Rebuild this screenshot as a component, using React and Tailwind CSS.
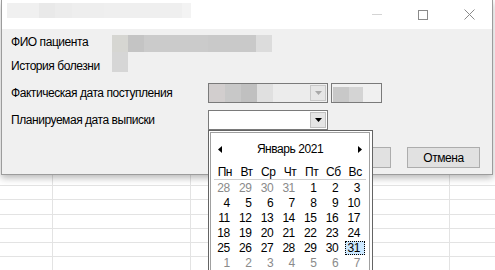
import React from 'react'

const cur = (a, b) => Array.from({ length: b - a + 1 }, (_, i) => ({ d: a + i, muted: false }))
const weeks = [
  [28, 29, 30, 31].map((d) => ({ d, muted: true })).concat(cur(1, 3)),
  cur(4, 10),
  cur(11, 17),
  cur(18, 24),
  cur(25, 31),
  [1, 2, 3, 4, 5, 6, 7].map((d) => ({ d, muted: true })),
]
const dayNames = ['Пн', 'Вт', 'Ср', 'Чт', 'Пт', 'Сб', 'Вс']

function Sheet() {
  const rows = [186, 14, 15, 14, 14, 14, 14]
  return (
    <div className="flex flex-col">
      {rows.map((h, i) => (
        <div key={i} className="flex border-b border-[#e3e3e3]" style={{ height: h }}>
          <div className="w-[53px] border-r border-[#e3e3e3]" />
          <div className="w-[138px] border-r border-[#e3e3e3]" />
          <div className="w-[259px] border-r border-[#e3e3e3]" />
          <div className="flex-1" />
        </div>
      ))}
    </div>
  )
}

function Calendar() {
  return (
    <div className="absolute left-0 top-[20px] w-[165px] h-[145px] border border-[#646464] bg-white pl-[1px] pr-[2px] pt-[1px] z-10">
      <div className="h-full border border-[#a0a0a0] bg-white">
        {/* month header */}
        <div className="h-[32px] flex items-center justify-between px-[7px]">
          <svg width="4" height="7" viewBox="0 0 4 7"><path d="M4 0 L0 3.5 L4 7 Z" fill="#000" /></svg>
          <span className="text-black">Январь 2021</span>
          <svg width="4" height="7" viewBox="0 0 4 7"><path d="M0 0 L4 3.5 L0 7 Z" fill="#000" /></svg>
        </div>
        <div className="px-[3px]">
          <div className="grid grid-cols-7 h-[15px] items-center border-b border-[#d0d0d0]">
            {dayNames.map((n) => (
              <div key={n} className="text-center text-black">{n}</div>
            ))}
          </div>
          {weeks.map((w, i) => (
            <div key={i} className="grid grid-cols-7 h-[15px]">
              {w.map((c, j) => {
                const sel = i === 4 && j === 6
                return (
                  <div key={j} className="relative h-[15px]">
                    {sel && <div className="absolute left-[1px] right-[1px] top-[1px] bottom-0 bg-[#cce8ff] border border-dotted border-black" />}
                    <div className={`relative h-full flex items-center justify-end pr-[6px] ${c.muted ? 'text-[#8a8a8a]' : 'text-black'}`}>{c.d}</div>
                  </div>
                )
              })}
            </div>
          ))}
        </div>
      </div>
    </div>
  )
}

function Arrow({ color }) {
  return <svg width="7" height="4" viewBox="0 0 7 4"><path d="M0 0 L7 0 L3.5 4 Z" fill={color} /></svg>
}

export default function App() {
  return (
    <div className="relative w-[495px] h-[270px] overflow-hidden bg-white font-['Liberation_Sans',Arial,sans-serif] text-[12px] leading-[14px] tracking-[-0.45px]">
      <Sheet />

      {/* dialog window */}
      <div className="absolute left-[1px] top-0 w-[492px] border-x border-b border-[#9c9c9c] shadow-[0_3px_7px_rgba(0,0,0,0.28)]">
        <div className="h-[29px] bg-white flex">
          <div className="ml-[5px] mt-[3px] flex h-[15px]">
            <div className="w-[32px] bg-[#f0f0f0]" />
            <div className="w-[16px] bg-[#e9e9e9]" />
            <div className="w-[17px] bg-[#ececec]" />
            <div className="w-[32px] bg-[#eeeeee]" />
            <div className="w-[78px] bg-[#efefef]" />
            <div className="w-[9px] bg-[#f3f3f3]" />
          </div>
          <div className="ml-auto flex">
            <div className="w-[46px] flex items-center justify-center">
              <div className="w-[10px] h-px bg-[#d4d4d4]" />
            </div>
            <div className="w-[46px] flex items-center justify-center">
              <svg width="10" height="10" viewBox="0 0 10 10"><rect x="0.5" y="0.5" width="9" height="9" fill="none" stroke="#8a8a8a" /></svg>
            </div>
            <div className="w-[46px] flex items-center justify-center">
              <svg width="11" height="11" viewBox="0 0 11 11"><path d="M0.5 0.5 L10.5 10.5 M10.5 0.5 L0.5 10.5" stroke="#8a8a8a" strokeWidth="1" /></svg>
            </div>
          </div>
        </div>

        <div className="bg-[#f0f0f0] h-[145px] flex flex-col pl-[9px] text-black">
          <div className="mt-[6px] h-[17px] flex">
            <div className="w-[101px]">ФИО пациента</div>
            <div className="flex h-[17px]">
              <div className="w-[16px] bg-[#d6d6d2]" />
              <div className="w-[16px] bg-[#c4c4c4]" />
              <div className="w-[64px] bg-[#cbcbcb]" />
              <div className="w-[48px] bg-[#c9c9c9]" />
              <div className="w-[16px] bg-[#dcdcdc]" />
            </div>
          </div>
          <div className="h-[20px] flex">
            <div className="w-[101px] mt-[7px]">История болезни</div>
            <div className="w-[16px] h-[20px] bg-[#d6d6d6]" />
          </div>
          <div className="mt-[11px] h-[20px] flex items-center">
            <div className="w-[197px]">Фактическая дата поступления</div>
            <div className="w-[120px] h-[20px] border border-[#7a7a7a] bg-[#f0f0f0] flex">
              <div className="flex h-[18px]">
                <div className="w-[16px] bg-[#d2cece]" />
                <div className="w-[16px] bg-[#c8c8c8]" />
                <div className="w-[16px] bg-[#c0c0c0]" />
                <div className="w-[16px] bg-[#e0e0e0]" />
                <div className="w-[37px] bg-[#ececec]" />
              </div>
              <div className="ml-auto mr-[1px] my-[1px] w-[16px] border border-[#c8c8c8] bg-[#e6e6e6] flex items-center justify-center">
                <Arrow color="#a8a8a8" />
              </div>
            </div>
            <div className="ml-[3px] w-[51px] h-[20px] border border-[#7a7a7a] bg-[#f0f0f0] flex items-center pl-[1px]">
              <div className="w-[16px] h-[15px] mt-[2px] bg-[#c8c8c8]" />
              <div className="w-[14px] h-[15px] mt-[2px] bg-[#d4d4d4]" />
            </div>
          </div>
          <div className="mt-[7px] h-[20px] flex items-center">
            <div className="w-[197px]">Планируемая дата выписки</div>
            <div className="relative">
              <div className="w-[120px] h-[20px] border border-[#7a7a7a] bg-white flex">
                <div className="ml-auto mr-[1px] my-[1px] w-[16px] border border-[#c0c0c0] bg-[#e5e5e5] flex items-center justify-center">
                  <Arrow color="#000" />
                </div>
              </div>
              <Calendar />
            </div>
          </div>
          <div className="mt-[17px] flex justify-end pr-[12px] gap-[16px]">
            <div className="w-[73px] h-[21px] border border-[#adadad] bg-[#e1e1e1] flex items-center justify-center">OK</div>
            <div className="w-[73px] h-[21px] border border-[#adadad] bg-[#e1e1e1] flex items-center justify-center">Отмена</div>
          </div>
        </div>
      </div>
    </div>
  )
}
